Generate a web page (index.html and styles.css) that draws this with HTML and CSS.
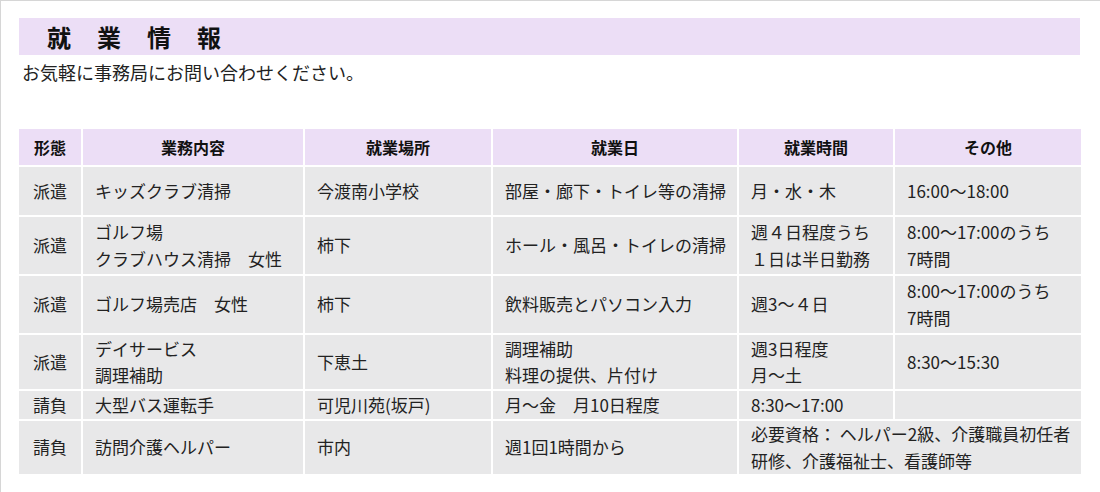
FILE: index.html
```html
<!DOCTYPE html>
<html lang="ja">
<head>
<meta charset="utf-8">
<title>就業情報</title>
<link rel="stylesheet" href="styles.css">
</head>
<body>
<div class="page">
  <h2 class="title">就　業　情　報</h2>
  <p class="lead">お気軽に事務局にお問い合わせください。</p>
  <table class="jobs">
    <colgroup>
      <col class="c-type"><col class="c-work"><col class="c-place"><col class="c-day"><col class="c-time"><col class="c-etc">
    </colgroup>
    <thead>
      <tr class="r-head">
        <th>形態</th><th>業務内容</th><th>就業場所</th><th>就業日</th><th>就業時間</th><th>その他</th>
      </tr>
    </thead>
    <tbody>
      <tr class="r1">
        <td class="type">派遣</td>
        <td>キッズクラブ清掃</td>
        <td>今渡南小学校</td>
        <td>部屋・廊下・トイレ等の清掃</td>
        <td>月・水・木</td>
        <td>16:00～18:00</td>
      </tr>
      <tr class="r2">
        <td class="type">派遣</td>
        <td>ゴルフ場<br>クラブハウス清掃　女性</td>
        <td>柿下</td>
        <td>ホール・風呂・トイレの清掃</td>
        <td>週４日程度うち<br>１日は半日勤務</td>
        <td>8:00～17:00のうち<br>7時間</td>
      </tr>
      <tr class="r3">
        <td class="type">派遣</td>
        <td>ゴルフ場売店　女性</td>
        <td>柿下</td>
        <td>飲料販売とパソコン入力</td>
        <td>週3～４日</td>
        <td>8:00～17:00のうち<br>7時間</td>
      </tr>
      <tr class="r4">
        <td class="type">派遣</td>
        <td>デイサービス<br>調理補助</td>
        <td>下恵土</td>
        <td>調理補助<br>料理の提供、片付け</td>
        <td>週3日程度<br>月～土</td>
        <td>8:30～15:30</td>
      </tr>
      <tr class="r5">
        <td class="type">請負</td>
        <td>大型バス運転手</td>
        <td>可児川苑(坂戸)</td>
        <td>月～金　月10日程度</td>
        <td>8:30～17:00</td>
        <td></td>
      </tr>
      <tr class="r6">
        <td class="type">請負</td>
        <td>訪問介護ヘルパー</td>
        <td>市内</td>
        <td>週1回1時間から</td>
        <td colspan="2">必要資格： ヘルパー2級、介護職員初任者<br>研修、介護福祉士、看護師等</td>
      </tr>
    </tbody>
  </table>
</div>
</body>
</html>
```

FILE: styles.css
```css
html, body {
  margin: 0;
  padding: 0;
  background: #ffffff;
}

body {
  font-family: "Noto Sans CJK JP", "Noto Sans", sans-serif;
  color: #222222;
}

.page {
  border-top: 1px solid #d6d6d6;
  border-left: 1px solid #d6d6d6;
  padding: 17px 20px 20px 18px;
  min-height: 460px;
}

.title {
  margin: 0;
  height: 37px;
  line-height: 37px;
  padding-left: 28px;
  background: #ecdef6;
  font-size: 24px;
  font-weight: bold;
  letter-spacing: 1px;
  color: #111111;
}

.lead {
  margin: 5px 0 0 3px;
  font-size: 18px;
  line-height: 24px;
}

.jobs {
  margin: 43px 0 0 -2px;
  border-collapse: separate;
  border-spacing: 2px;
  table-layout: fixed;
  width: 1066px;
  font-size: 17px;
  line-height: 26.5px;
}

.c-type { width: 62px; }
.c-work { width: 220px; }
.c-place { width: 186px; }
.c-day { width: 244px; }
.c-time { width: 154px; }
.c-etc { width: 186px; }

.jobs th {
  background: #ecdef6;
  font-size: 16px;
  font-weight: bold;
  text-align: center;
  padding: 0;
  height: 36px;
  color: #111111;
}

.jobs td {
  background: #e8e8e9;
  padding: 0 4px 0 12px;
  vertical-align: middle;
  text-align: left;
  white-space: nowrap;
}

.jobs td.type {
  text-align: center;
  padding: 0;
}

.r1 td { height: 48px; }
.r2 td { height: 57px; }
.r3 td { height: 57px; }
.r4 td { height: 54px; }
.r5 td { height: 28px; }
.r6 td { height: 53px; }
```
